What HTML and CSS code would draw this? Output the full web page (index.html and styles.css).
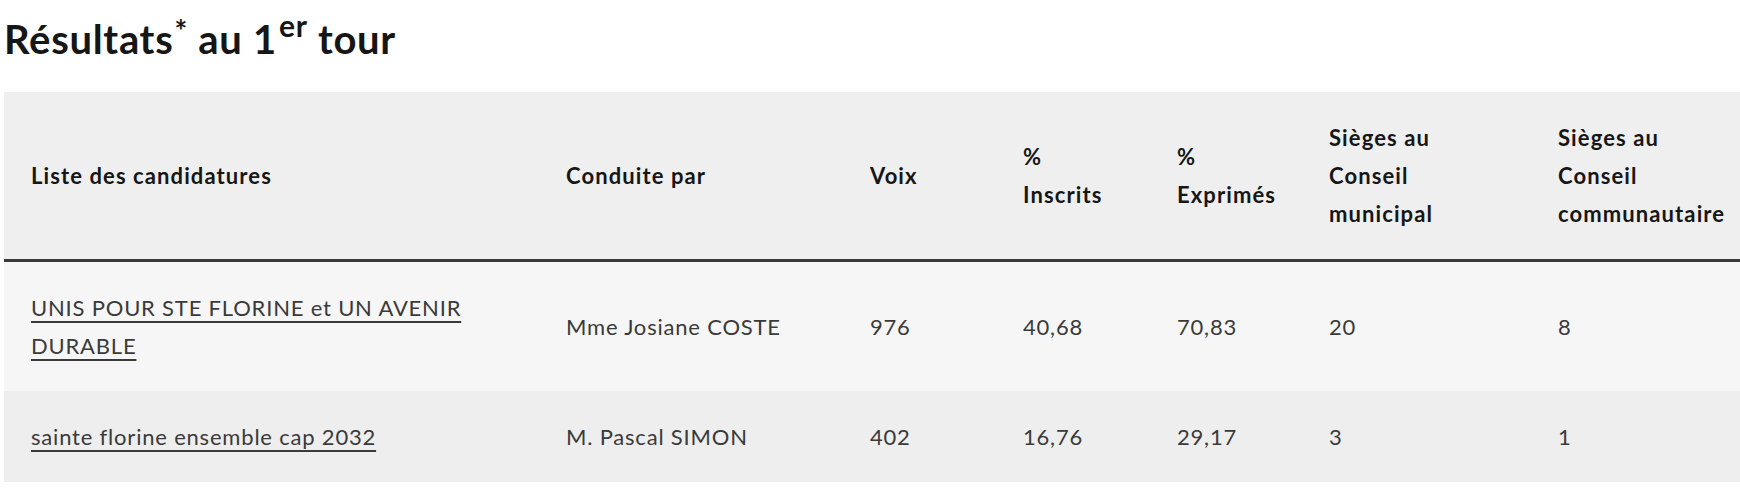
FILE: index.html
```html
<!DOCTYPE html>
<html lang="fr">
<head>
<meta charset="utf-8">
<title>Résultats au 1er tour</title>
<link rel="stylesheet" href="styles.css">
</head>
<body>
<div class="page">
  <h2 class="title">Résultats<sup class="star">*</sup> au 1<sup class="ord">er</sup> tour</h2>
  <div class="table-wrap">
    <table class="results">
      <colgroup>
        <col class="c-liste">
        <col class="c-tete">
        <col class="c-voix">
        <col class="c-ins">
        <col class="c-exp">
        <col class="c-mun">
        <col class="c-com">
      </colgroup>
      <thead>
        <tr>
          <th>Liste des candidatures</th>
          <th>Conduite par</th>
          <th>Voix</th>
          <th>%<br>Inscrits</th>
          <th>%<br>Exprimés</th>
          <th>Sièges au<br>Conseil<br>municipal</th>
          <th>Sièges au<br>Conseil<br>communautaire</th>
        </tr>
      </thead>
      <tbody>
        <tr class="odd">
          <td><a class="link" href="#">UNIS POUR STE FLORINE et UN AVENIR DURABLE</a></td>
          <td>Mme Josiane COSTE</td>
          <td>976</td>
          <td>40,68</td>
          <td>70,83</td>
          <td>20</td>
          <td>8</td>
        </tr>
        <tr class="even">
          <td><a class="link" href="#">sainte florine ensemble cap 2032</a></td>
          <td>M. Pascal SIMON</td>
          <td>402</td>
          <td>16,76</td>
          <td>29,17</td>
          <td>3</td>
          <td>1</td>
        </tr>
      </tbody>
    </table>
  </div>
</div>
</body>
</html>
```

FILE: styles.css
```css
html, body {
  margin: 0;
  padding: 0;
  background: #ffffff;
}

body {
  font-family: "Lato", "Liberation Sans", sans-serif;
  color: #3a3a3a;
  overflow: hidden;
}

.page {
  padding: 0 0 0 4px;
  width: 1736px;
  overflow: hidden;
}

.title {
  margin: 15px 0 29px 0;
  font-size: 40px;
  line-height: 48px;
  font-weight: 700;
  color: #161616;
  letter-spacing: 0.7px;
}

.title sup {
  line-height: 0;
  font-weight: 700;
}

.title .star {
  font-size: 30px;
  vertical-align: 12px;
  margin-left: 1px;
}

.title .ord {
  font-size: 30px;
  vertical-align: 17px;
  margin-left: 2px;
}

.table-wrap {
  width: 1760px;
}

.results {
  border-collapse: collapse;
  table-layout: fixed;
  width: 1755px;
  font-size: 22px;
  line-height: 38px;
}

.c-liste { width: 535px; }
.c-tete { width: 304px; }
.c-voix { width: 153px; }
.c-ins { width: 154px; }
.c-exp { width: 152px; }
.c-mun { width: 229px; }
.c-com { width: 228px; }

.results th,
.results td {
  padding: 26.5px 27px;
  text-align: left;
  vertical-align: middle;
}

.results thead tr {
  background: #efefef;
  border-bottom: 3.5px solid #3a3a3a;
}

.results th {
  font-weight: 700;
  color: #161616;
  letter-spacing: 1.1px;
}

.results tbody tr.odd {
  background: #f6f6f6;
}

.results tbody tr.even {
  background: #eeeeee;
}

.results td {
  color: #3a3a3a;
  letter-spacing: 0.8px;
}

.link {
  color: #3a3a3a;
  text-decoration: underline;
  text-decoration-thickness: 2px;
  text-underline-offset: 5px;
}
```
